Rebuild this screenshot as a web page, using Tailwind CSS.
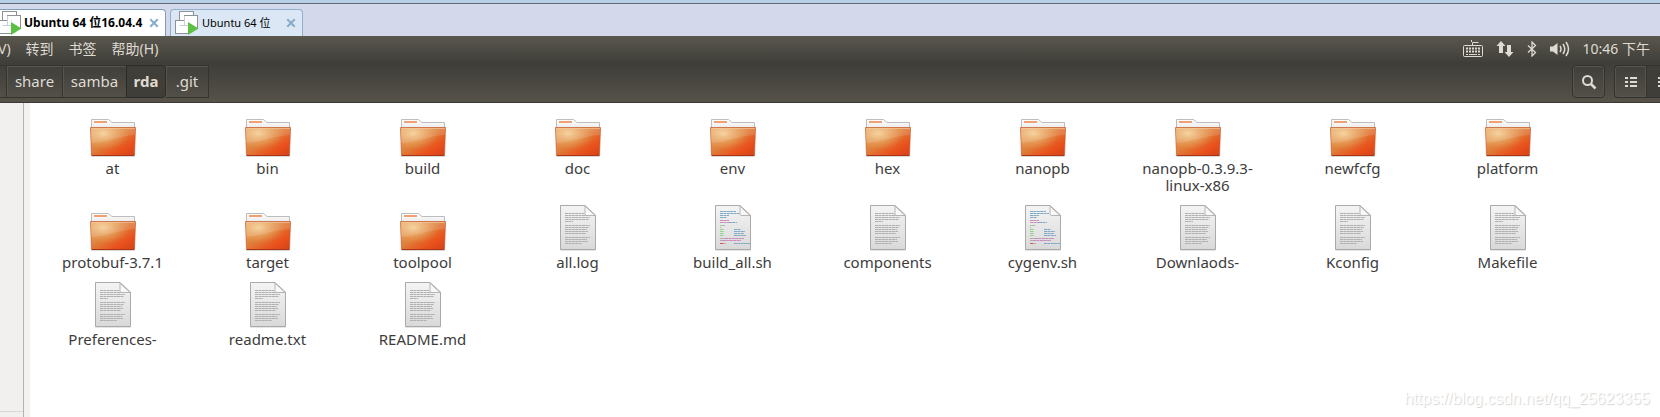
<!DOCTYPE html>
<html lang="zh-CN">
  <head>
    <meta charset="UTF-8" />
    <meta name="viewport" content="width=device-width, initial-scale=1" />
    <title>rda</title>
    <script src="https://cdn.jsdelivr.net/npm/@tailwindcss/browser@4"></script>
  </head>
  <body class="flex flex-col h-screen overflow-hidden bg-white text-[#3c3c3c] font-['Noto_Sans','Noto_Sans_CJK_SC',sans-serif]">
    <svg class="absolute w-0 h-0" aria-hidden="true">
      <defs>
        <linearGradient id="folderFill" x1="0" y1="0" x2="1" y2="1">
          <stop offset="0" stop-color="#e8a45f" />
          <stop offset=".45" stop-color="#df7f3a" />
          <stop offset=".75" stop-color="#e9501b" />
          <stop offset="1" stop-color="#d2421a" />
        </linearGradient>
        <radialGradient id="folderGlow" cx=".28" cy=".2" r=".6">
          <stop offset="0" stop-color="#f6d59c" stop-opacity=".9" />
          <stop offset="1" stop-color="#e8a860" stop-opacity="0" />
        </radialGradient>
        <linearGradient id="folderBack" x1="0" y1="0" x2="0" y2="1">
          <stop offset="0" stop-color="#ffffff" />
          <stop offset="1" stop-color="#e6e6e6" />
        </linearGradient>
        <linearGradient id="paper" x1="0" y1="0" x2="0" y2="1">
          <stop offset="0" stop-color="#f4f4f4" />
          <stop offset="1" stop-color="#d9d9d9" />
        </linearGradient>
        <linearGradient id="fold" x1="0" y1="1" x2="1" y2="0">
          <stop offset="0" stop-color="#ffffff" />
          <stop offset=".5" stop-color="#f4f4f4" />
          <stop offset="1" stop-color="#b8b8b8" />
        </linearGradient>
      </defs>
      <symbol id="folder" viewBox="0 0 48 48">
        <rect x="2" y="45" width="44" height="2" rx="1" fill="#000" opacity=".15" />
        <path d="M2.500 20V9.500H19.500L23 12.500H45.500V20Z" fill="url(#folderBack)" stroke="#bdbdbd" />
        <rect x="5" y="11" width="13" height="2" fill="#f0a071" />
        <path d="M1.500 17.500H46.500L45.500 45.500H2.500Z" fill="url(#folderFill)" stroke="#c65a2c" stroke-opacity=".7" />
        <path d="M2 18H46L45 45H3Z" fill="url(#folderGlow)" />
        <path d="M2 18H46V25C30 26 18 32 2 33Z" fill="#fff" opacity=".12" />
        <path d="M2 18.500H46" stroke="#f6c9a0" opacity=".6" />
        <path d="M3 45.500H45" stroke="#a93416" />
      </symbol>
      <symbol id="page" viewBox="0 0 48 48">
        <rect x="6" y="45" width="36" height="2" rx="1" fill="#000" opacity=".1" />
        <path d="M6.500 1.500H31L41.500 11V45.500H6.500Z" fill="url(#paper)" stroke="#aaa" />
        <path d="M31 2V10Q31 11.500 33 11.500H41Z" fill="url(#fold)" stroke="#b5b5b5" />
      </symbol>
      <symbol id="text" viewBox="0 0 48 48">
        <use href="#page" />
        <path d="M11 9.500H30M11 11.500H33M11 13.500H36M11 15.500H35M11 17.500H19M11 21.500H36M11 23.500H35M11 25.500H33M11 27.500H34M11 29.500H32M11 33.500H36M11 35.500H33M11 37.500H34M11 39.500H28" stroke="#b0b0b0" stroke-dasharray="3 .4" />
      </symbol>
      <symbol id="script" viewBox="0 0 48 48">
        <use href="#page" />
        <g fill="none" stroke-dasharray="3 .4">
          <path d="M11 7.500H27M11 9.500H30M11 11.500H20M11 13.500H18M20 18.500H28M25 25.500H32M25 27.500H36M25 29.500H35M25 31.500H37M25 39.500H41" stroke="#7fa9c6" />
          <path d="M11 16.500H20M11 18.500H20M16 34.500H35M14 36.500H32" stroke="#c98bbd" />
          <path d="M11 21.500H14M11 25.500H15M11 27.500H15M11 29.500H15M11 31.500H15" stroke="#93cf8e" />
          <path d="M14 21.500H16M11 23.500H12M11 34.500H16M11 36.500H14M14 39.500H17" stroke="#b0a8ac" />
          <path d="M11 39.500H14" stroke="#d9534f" />
        </g>
      </symbol>
      <symbol id="vm" viewBox="0 0 24 24">
        <g fill="#fff" stroke="#8c9196">
          <rect x="4.500" y=".5" width="14" height="14" />
          <rect x="9.500" y="4.500" width="13" height="13" />
          <rect x=".5" y="9.500" width="13" height="13" />
        </g>
        <path d="M9.500 5V14.500H18.500M9.500 10V14.500H4.500" fill="#fff" stroke="#c6cfdb" />
        <path d="M13 11L23.500 17.500L13 24Z" fill="#5cc043" />
      </symbol>
    </svg>

    <!-- Virtual machine tabs -->
    <div class="h-1 shrink-0 bg-[#b7d0e8] border-b border-[#5f6b78]"></div>
    <nav class="flex items-end h-8 shrink-0 bg-[#d3d9eb] text-xs text-black">
      <div class="flex items-center w-[166px] h-[27px] pr-1.5 bg-white border-t border-r border-[#7f9db9] rounded-tr-sm">
        <svg class="w-6 h-6 -ml-0.5 shrink-0"><use href="#vm" /></svg>
        <a href="#" class="ml-0.5 grow whitespace-nowrap font-bold">Ubuntu 64 位16.04.4</a>
        <button type="button" aria-label="关闭"><svg class="w-2.5 h-2.5" viewBox="0 0 8 8"><path d="M1 1L7 7M7 1L1 7" stroke="#86abca" stroke-width="1.600" /></svg></button>
      </div>
      <div class="flex items-center w-[133px] h-[27px] ml-1 pl-1 pr-1.5 bg-[#dbe7f5] border border-b-0 border-[#8fb0cd] rounded-t-sm">
        <svg class="w-6 h-6 shrink-0"><use href="#vm" /></svg>
        <a href="#" class="ml-[3px] grow whitespace-nowrap text-[11px]">Ubuntu 64 位</a>
        <button type="button" aria-label="关闭"><svg class="w-2.5 h-2.5" viewBox="0 0 8 8"><path d="M1 1L7 7M7 1L1 7" stroke="#86abca" stroke-width="1.600" /></svg></button>
      </div>
    </nav>

    <!-- Menu bar -->
    <header class="flex items-center justify-between h-[26px] shrink-0 pr-2.5 bg-linear-to-b from-[#5a574e] to-[#403f3a] text-[#dfdbd2] text-sm">
      <div class="flex gap-[15px] -ml-0.5">
        <button type="button">V)</button>
        <button type="button">转到</button>
        <button type="button">书签</button>
        <button type="button">帮助(H)</button>
      </div>
      <div class="flex items-center gap-[13px]">
        <button type="button" aria-label="键盘"><svg class="w-5 h-5" viewBox="0 0 20 20" fill="none" stroke="#dfdbd2"><path d="M9.500 6V3.500H15.500M8.500 3V1" /><rect x=".5" y="6.500" width="19" height="11" rx="1" /><path d="M3 9.500H17M3 12.500H17" stroke-width="2" stroke-dasharray="2 1" /><path d="M3 15.500H5M6 15.500H14M15 15.500H17" /></svg></button>
        <button type="button" aria-label="网络"><svg class="w-[18px] h-[18px]" viewBox="0 0 18 18" fill="#dfdbd2"><path d="M5 1L9.500 6H7V13H3V6H.5Z" /><path d="M13 17L17.500 12H15V5H11V12H8.500Z" /></svg></button>
        <button type="button" aria-label="蓝牙"><svg class="w-2.5 h-4" viewBox="0 0 10 16" fill="none" stroke="#dfdbd2" stroke-width="1.300"><path d="M1 4.500L8.500 11.500L5 15V1L8.500 4.500L1 11.500" /></svg></button>
        <button type="button" aria-label="音量"><svg class="w-5 h-[18px]" viewBox="0 0 20 18" fill="none" stroke="#dfdbd2" stroke-width="1.500"><path d="M0 6.500H3L7.500 3V15L3 11.500H0Z" fill="#dfdbd2" stroke="none" /><path d="M10 6Q12 9 10 12M13 4Q16.500 9 13 14M16 2Q21 9 16 16" /></svg></button>
        <button type="button">10:46 下午</button>
      </div>
    </header>

    <!-- Path bar -->
    <div class="flex items-start justify-between h-[41px] shrink-0 pt-[3px] bg-linear-to-b from-[#3e3d39] to-[#56524a] border-b border-[#3a3934] text-[#dfdbd2] text-[15px]">
      <div class="flex h-[33px]">
        <button type="button" aria-label="上级" class="w-[7px] border-y border-r border-[#35342f]"></button>
        <a href="#" class="flex items-center justify-center w-14 border-y border-r border-[#35342f] shadow-[inset_1px_1px_#57554d]">share</a>
        <a href="#" class="flex items-center justify-center w-[63px] border-y border-[#35342f] shadow-[inset_1px_1px_#57554d]">samba</a>
        <a href="#" aria-current="page" class="flex items-center justify-center w-10 border border-[#2c2b27] rounded-r bg-[#403e39] font-bold">rda</a>
        <a href="#" class="flex items-center justify-center w-[43px] border border-l-0 border-[#35342f] shadow-[inset_1px_1px_#57554d]">.git</a>
      </div>
      <div class="flex h-[33px]">
        <button type="button" aria-label="搜索" class="flex items-center justify-center w-[33px] border border-[#33322e] rounded shadow-[inset_0_0_0_1px_#57554d]"><svg class="w-4 h-4" viewBox="0 0 16 16" fill="none" stroke="#dfdbd2"><circle cx="6.500" cy="6.500" r="4.500" stroke-width="2" /><path d="M10 10L14.500 14.500" stroke-width="2.500" /></svg></button>
        <button type="button" aria-label="列表视图" class="flex items-center justify-center w-8 ml-[9px] border border-r-0 border-[#33322e] rounded-l shadow-[inset_0_0_0_1px_#57554d]"><svg class="w-3 h-3" viewBox="0 0 12 12" stroke="#dfdbd2" stroke-width="2"><path d="M0 2H3M5 2H12M0 6H3M5 6H12M0 10H3M5 10H12" /></svg></button>
        <button type="button" aria-label="网格视图" class="flex items-center justify-end w-3.5 border border-r-0 border-[#33322e] bg-[#403e39]"><svg class="w-0.5 h-3" viewBox="0 0 2 12" stroke="#dfdbd2" stroke-width="2"><path d="M0 2H2M0 6H2M0 10H2" /></svg></button>
      </div>
    </div>

    <div class="relative flex grow min-h-0">
      <aside class="w-6 shrink-0 bg-[#f1f0ef] border-r border-[#b4b3b0] pb-[5px] flex flex-col justify-end"><hr class="border-[#d8d7d4]" /></aside>
      <div class="w-1.5 shrink-0 bg-[#f2f1f0]"></div>
      <main id="files" class="grow grid grid-cols-[repeat(auto-fill,155px)] content-start gap-y-2.5 pl-[5px] pt-[7px] text-[15px] leading-[17px] text-center"></main>
      <p class="absolute right-2.5 bottom-1.5 font-['Liberation_Sans',sans-serif] text-base text-white [text-shadow:1px_1px_1px_#d4d4d4]">https://blog.csdn.net/qq_25623355</p>
    </div>

    <script>
      const files = [
        ["folder", "at"], ["folder", "bin"], ["folder", "build"], ["folder", "doc"], ["folder", "env"],
        ["folder", "hex"], ["folder", "nanopb"], ["folder", "nanopb-0.3.9.3-linux-x86"], ["folder", "newfcfg"], ["folder", "platform"],
        ["folder", "protobuf-3.7.1"], ["folder", "target"], ["folder", "toolpool"], ["text", "all.log"], ["script", "build_all.sh"],
        ["text", "components"], ["script", "cygenv.sh"], ["text", "Downlaods-"], ["text", "Kconfig"], ["text", "Makefile"],
        ["text", "Preferences-"], ["text", "readme.txt"], ["text", "README.md"],
      ];

      document.getElementById("files").innerHTML = files.map(([icon, name]) => `
        <a href="#" class="flex flex-col items-center">
          <svg class="w-12 h-12 mb-0.5"><use href="#${icon}" /></svg>
          <span class="max-w-32">${name}</span>
        </a>`).join("");
    </script>
  </body>
</html>
